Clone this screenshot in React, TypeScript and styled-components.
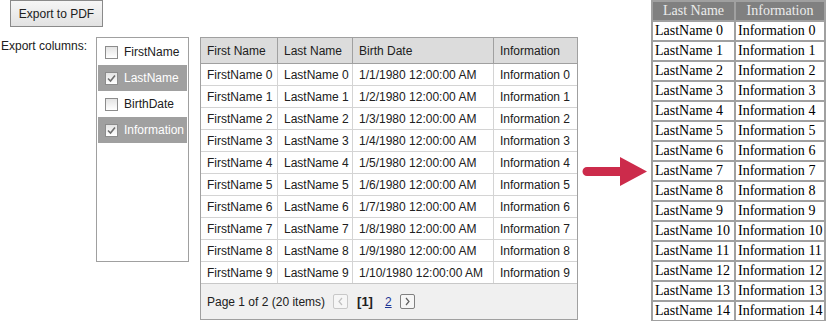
import React from 'react';
import styled, { createGlobalStyle } from 'styled-components';

const GlobalStyle = createGlobalStyle`
  body {
    margin: 0;
    background: #ffffff;
    font-family: 'Liberation Sans', Tahoma, sans-serif;
    font-size: 12px;
    color: #202020;
  }
`;

const Page = styled.div`
  display: flex;
  align-items: flex-start;
  width: 828px;
  height: 321px;
  overflow: hidden;
`;

const DemoArea = styled.div`
  display: flex;
  flex-direction: column;
  width: 582px;
  flex-shrink: 0;
`;

const ExportButton = styled.button`
  align-self: flex-start;
  margin-left: 10px;
  width: 93px;
  height: 27px;
  padding: 0;
  border: 1px solid #8a8a8a;
  background: linear-gradient(#f6f6f6, #e2e2e2);
  font-family: 'Liberation Sans', Tahoma, sans-serif;
  font-size: 12px;
  color: #202020;
`;

const OptionsRow = styled.div`
  display: flex;
  align-items: flex-start;
  margin-top: 10px;
`;

const ColumnsLabel = styled.div`
  width: 95px;
  padding-left: 1px;
  line-height: 14px;
  margin-top: 2px;
`;

const CheckList = styled.div`
  width: 93px;
  height: 225px;
  box-sizing: border-box;
  border: 1px solid #a0a0a0;
  padding: 1px;
  display: flex;
  flex-direction: column;
`;

const CheckItem = styled.label<{ $checked: boolean }>`
  display: flex;
  align-items: center;
  gap: 6px;
  height: 26px;
  padding-left: 7px;
  background: ${({ $checked }) => ($checked ? '#a0a0a0' : 'transparent')};
  color: ${({ $checked }) => ($checked ? '#ffffff' : '#202020')};
  white-space: nowrap;
`;

const CheckBox = styled.span`
  display: flex;
  align-items: center;
  justify-content: center;
  width: 13px;
  height: 13px;
  box-sizing: border-box;
  border: 1px solid #8c8c8c;
  background: linear-gradient(#e4e4e4, #ffffff);
`;

const GridBox = styled.div`
  margin-left: 11px;
  width: 378px;
  box-sizing: border-box;
  border: 1px solid #a0a0a0;
`;

const Table = styled.table`
  width: 376px;
  table-layout: fixed;
  border-collapse: separate;
  border-spacing: 0;
`;

const HeadCell = styled.th<{ $w: number; $last?: boolean }>`
  width: ${({ $w }) => $w}px;
  box-sizing: border-box;
  height: 26px;
  padding: 0 0 0 6px;
  text-align: left;
  font-weight: normal;
  background: #dcdcdc;
  border-bottom: 1px solid #a0a0a0;
  border-right: ${({ $last }) => ($last ? 'none' : '1px solid #a0a0a0')};
  white-space: nowrap;
`;

const Cell = styled.td<{ $last?: boolean }>`
  box-sizing: border-box;
  height: 22px;
  padding: 0 0 0 6px;
  border-bottom: 1px solid #d4d4d4;
  border-right: ${({ $last }) => ($last ? 'none' : '1px solid #d4d4d4')};
  white-space: nowrap;
  overflow: hidden;
`;

const Pager = styled.div`
  display: flex;
  align-items: center;
  height: 35px;
  padding-left: 6px;
  background: #f0f0f0;
  border-top: 1px solid #c8c8c8;
  margin-top: -1px;
`;

const PagerText = styled.span`
  margin-right: 8px;
`;

const PagerButton = styled.span<{ $disabled?: boolean }>`
  display: flex;
  align-items: center;
  justify-content: center;
  width: 15px;
  height: 15px;
  box-sizing: border-box;
  border: 1px solid ${({ $disabled }) => ($disabled ? '#c8c8c8' : '#808080')};
  border-radius: 2px;
  background: #f6f6f6;
`;

const CurrentPage = styled.b`
  margin: 0 12px 0 9px;
  font-size: 13px;
`;

const PageLink = styled.a`
  color: #1e3695;
  text-decoration: underline;
  margin-right: 8px;
`;

const ArrowWrap = styled.div`
  margin-top: 157px;
  margin-left: 0;
  width: 69px;
  flex-shrink: 0;
`;

const PdfTable = styled.table`
  flex-shrink: 0;
  border-collapse: separate;
  border-spacing: 2px;
  background: #a0a0a0;
  font-family: 'Liberation Serif', 'Times New Roman', serif;
  font-size: 14px;
  color: #000000;
  table-layout: fixed;
  width: 175px;
`;

const PdfHead = styled.th<{ $w: number }>`
  width: ${({ $w }) => $w}px;
  box-sizing: border-box;
  height: 18px;
  padding: 0 2px;
  background: #808080;
  color: #ececec;
  font-weight: normal;
  text-align: center;
  line-height: 16px;
`;

const PdfCell = styled.td`
  box-sizing: border-box;
  height: 18px;
  padding: 0 2px;
  background: #ffffff;
  line-height: 16px;
  white-space: nowrap;
`;

const Check = () => (
  <svg width="9" height="9" viewBox="0 0 9 9">
    <path d="M1 4.5 L3.5 7 L8 1.5" fill="none" stroke="#6e6e6e" strokeWidth="1.6" />
  </svg>
);

const Chevron = ({ dir, color }: { dir: 'left' | 'right'; color: string }) => (
  <svg width="7" height="9" viewBox="0 0 7 9">
    <path
      d={dir === 'left' ? 'M5 1 L2 4.5 L5 8' : 'M2 1 L5 4.5 L2 8'}
      fill="none"
      stroke={color}
      strokeWidth="1.2"
    />
  </svg>
);

const columns = [
  { name: 'FirstName', checked: false },
  { name: 'LastName', checked: true },
  { name: 'BirthDate', checked: false },
  { name: 'Information', checked: true },
];

const rows = Array.from({ length: 10 }, (_, i) => ({
  first: `FirstName ${i}`,
  last: `LastName ${i}`,
  birth: `1/${i + 1}/1980 12:00:00 AM`,
  info: `Information ${i}`,
}));

const App: React.FC = () => {
  return (
    <>
      <GlobalStyle />
      <Page>
        <DemoArea>
          <ExportButton>Export to PDF</ExportButton>
          <OptionsRow>
            <ColumnsLabel>Export columns:</ColumnsLabel>
            <CheckList>
              {columns.map((c) => (
                <CheckItem key={c.name} $checked={c.checked}>
                  <CheckBox>{c.checked && <Check />}</CheckBox>
                  {c.name}
                </CheckItem>
              ))}
            </CheckList>
            <GridBox>
              <Table>
                <thead>
                  <tr>
                    <HeadCell $w={77}>First Name</HeadCell>
                    <HeadCell $w={75}>Last Name</HeadCell>
                    <HeadCell $w={141}>Birth Date</HeadCell>
                    <HeadCell $w={83} $last>Information</HeadCell>
                  </tr>
                </thead>
                <tbody>
                  {rows.map((r) => (
                    <tr key={r.first}>
                      <Cell>{r.first}</Cell>
                      <Cell>{r.last}</Cell>
                      <Cell>{r.birth}</Cell>
                      <Cell $last>{r.info}</Cell>
                    </tr>
                  ))}
                </tbody>
              </Table>
              <Pager>
                <PagerText>Page 1 of 2 (20 items)</PagerText>
                <PagerButton $disabled>
                  <Chevron dir="left" color="#c0c0c0" />
                </PagerButton>
                <CurrentPage>[1]</CurrentPage>
                <PageLink href="#">2</PageLink>
                <PagerButton>
                  <Chevron dir="right" color="#606060" />
                </PagerButton>
              </Pager>
            </GridBox>
          </OptionsRow>
        </DemoArea>
        <ArrowWrap>
          <svg width="66" height="30" viewBox="0 0 66 30">
            <path d="M5 10 H38 V0 L65 14.5 L38 29 V19 H5 A4.5 4.5 0 0 1 5 10 Z" fill="#cc2b4b" />
          </svg>
        </ArrowWrap>
        <PdfTable>
          <thead>
            <tr>
              <PdfHead $w={81}>Last Name</PdfHead>
              <PdfHead $w={88}>Information</PdfHead>
            </tr>
          </thead>
          <tbody>
            {Array.from({ length: 15 }, (_, i) => (
              <tr key={i}>
                <PdfCell>LastName {i}</PdfCell>
                <PdfCell>Information {i}</PdfCell>
              </tr>
            ))}
          </tbody>
        </PdfTable>
      </Page>
    </>
  );
};

export default App;
